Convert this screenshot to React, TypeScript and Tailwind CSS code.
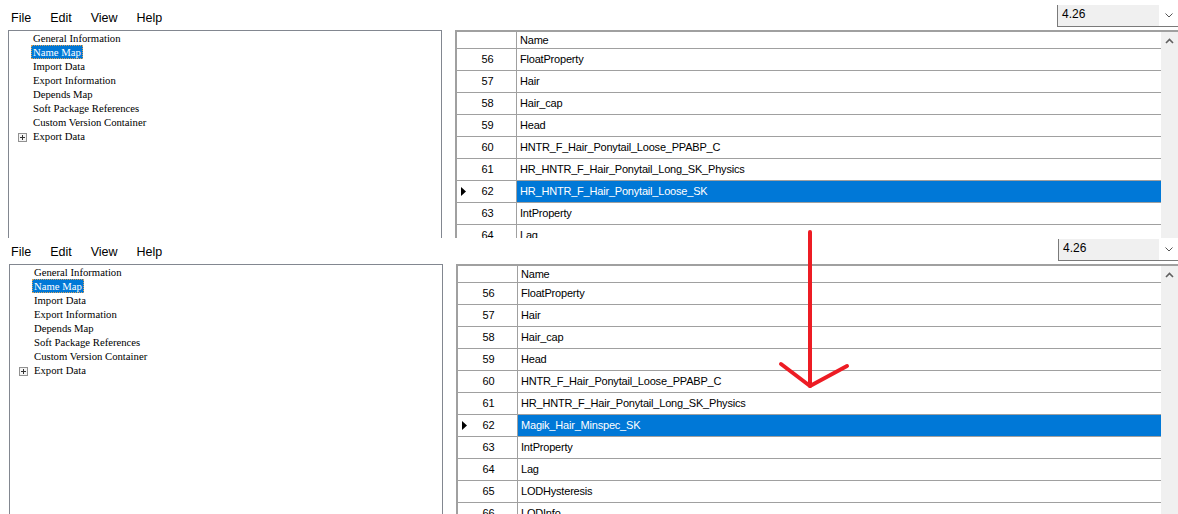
import React from "react";

const treeItems = [
  "General Information",
  "Name Map",
  "Import Data",
  "Export Information",
  "Depends Map",
  "Soft Package References",
  "Custom Version Container",
];

const topRows: [number, string][] = [
  [56, "FloatProperty"],
  [57, "Hair"],
  [58, "Hair_cap"],
  [59, "Head"],
  [60, "HNTR_F_Hair_Ponytail_Loose_PPABP_C"],
  [61, "HR_HNTR_F_Hair_Ponytail_Long_SK_Physics"],
  [62, "HR_HNTR_F_Hair_Ponytail_Loose_SK"],
  [63, "IntProperty"],
  [64, "Lag"],
];

const bottomRows: [number, string][] = [
  [56, "FloatProperty"],
  [57, "Hair"],
  [58, "Hair_cap"],
  [59, "Head"],
  [60, "HNTR_F_Hair_Ponytail_Loose_PPABP_C"],
  [61, "HR_HNTR_F_Hair_Ponytail_Long_SK_Physics"],
  [62, "Magik_Hair_Minspec_SK"],
  [63, "IntProperty"],
  [64, "Lag"],
  [65, "LODHysteresis"],
  [66, "LODInfo"],
];

const sans = { fontFamily: '"Liberation Sans", Arial, sans-serif' };
const serif = { fontFamily: '"Liberation Serif", "Times New Roman", serif' };

const Tree = () => (
  <div className="w-[434px] h-[300px] border border-[#828790] bg-white text-[10.7px] text-black" style={serif}>
    {treeItems.map((t) => (
      <div key={t} className="h-[14px] flex items-center pl-[22px]">
        <span
          className={`px-[1px] leading-[12px] border ${
            t === "Name Map"
              ? "bg-[#0078d7] text-white border-dotted border-[#d9a25a]"
              : "border-transparent"
          }`}
        >
          {t}
        </span>
      </div>
    ))}
    <div className="h-[14px] flex items-center pl-[9px]">
      <div className="w-[9px] h-[9px] border border-[#919191] bg-[#f4f4f4] flex items-center justify-center mt-[2px]">
        <svg width="7" height="7" viewBox="0 0 7 7">
          <path d="M1 3.5h5M3.5 1v5" stroke="#333" strokeWidth="1" />
        </svg>
      </div>
      <span className="ml-[4px] px-[1px] leading-[12px] border border-transparent">Export Data</span>
    </div>
  </div>
);

const Grid = ({ rows }: { rows: [number, string][] }) => (
  <div className="flex-1 h-[300px] border-t-2 border-l-2 border-[#a0a0a0] flex text-[11px] tracking-[-0.2px] text-black" style={sans}>
    <div className="flex-1 flex flex-col">
      <div className="h-[17px] flex border-b border-[#a0a0a0] shrink-0">
        <div className="w-[60px] border-r border-[#a0a0a0]" />
        <div className="flex-1 pl-[3px] flex items-center">Name</div>
      </div>
      {rows.map(([n, name]) => {
        const sel = n === 62;
        return (
          <div key={n} className="h-[22px] flex border-b border-[#a0a0a0] shrink-0">
            <div className="w-[60px] border-r border-[#a0a0a0] flex items-center relative">
              {sel && (
                <svg className="absolute left-[4px] top-[6px]" width="6" height="9" viewBox="0 0 6 9">
                  <path d="M0 0L5 4.5L0 9Z" fill="#000" />
                </svg>
              )}
              <span className="w-full text-center pl-[2px]">{n}</span>
            </div>
            <div className={`flex-1 pl-[3px] flex items-center ${sel ? "bg-[#0078d7] text-white" : ""}`}>
              {name}
            </div>
          </div>
        );
      })}
    </div>
    <div className="w-[17px] bg-[#f0f0f0] flex justify-center pt-[6px]">
      <svg width="9" height="6" viewBox="0 0 9 6">
        <path d="M1 5L4.5 1.5L8 5" stroke="#606060" strokeWidth="1.6" fill="none" />
      </svg>
    </div>
  </div>
);

const Panel = ({
  rows,
  height,
  menuH,
  shift,
}: {
  rows: [number, string][];
  height: string;
  menuH: string;
  shift: string;
}) => (
  <div className={`${height} overflow-hidden bg-white flex flex-col`}>
    <div className={`${menuH} flex items-end shrink-0`}>
      <div className="flex gap-[19px] pl-[11px] pb-[2px] text-[12.5px] text-black" style={sans}>
        <span>File</span>
        <span>Edit</span>
        <span>View</span>
        <span>Help</span>
      </div>
      <div className={`ml-auto mb-[3px] h-[22px] flex border-l border-b border-[#7a7a7a] ${shift === "pl-[9px]" ? "w-[120px]" : "w-[121px]"}`}>
        <div className="flex-1 bg-[#f0f0f0] pl-[4px] text-[12px] text-black leading-[18px]" style={sans}>
          4.26
        </div>
        <div className="w-[19px] flex items-center justify-center">
          <svg width="8" height="5" viewBox="0 0 8 5">
            <path d="M0.5 0.5L4 4L7.5 0.5" stroke="#555" strokeWidth="1" fill="none" />
          </svg>
        </div>
      </div>
    </div>
    <div className={`flex ${shift}`}>
      <Tree />
      <div className="w-[13px]" />
      <Grid rows={rows} />
    </div>
  </div>
);

export default function App() {
  return (
    <div className="w-[1178px] h-[514px] relative overflow-hidden bg-white">
      <Panel rows={topRows} height="h-[238px]" menuH="h-[30px]" shift="pl-[8px]" />
      <Panel rows={bottomRows} height="h-[276px]" menuH="h-[26px]" shift="pl-[9px]" />
      <svg className="absolute left-0 top-0 pointer-events-none" width="1178" height="514" viewBox="0 0 1178 514">
        <g stroke="#ed1c24" strokeWidth="4" strokeLinecap="round" fill="none">
          <path d="M810 232V386" />
          <path d="M781 364L810 386L847 366" strokeLinejoin="round" />
        </g>
      </svg>
    </div>
  );
}
